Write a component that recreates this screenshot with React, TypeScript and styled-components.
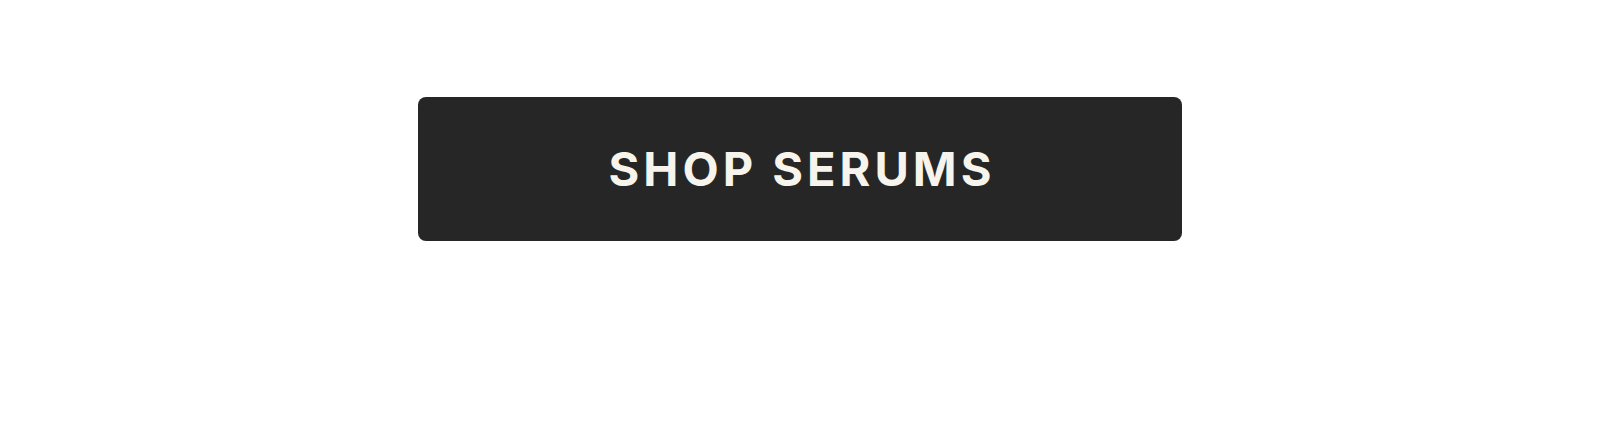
import React from "react";
import styled, { createGlobalStyle } from "styled-components";

const GlobalStyle = createGlobalStyle`
  body {
    margin: 0;
    background: #ffffff;
  }
`;

const Page = styled.main`
  display: flex;
  justify-content: center;
  padding: 97px 24px;
`;

/* The right padding is smaller by the letter spacing that trails the label. */
const ShopButton = styled.button`
  box-sizing: border-box;
  padding: 40px 187px 40px 191px;
  border: 0;
  border-radius: 8px;
  background: #262626;
  color: #f6f4ed;
  font-family: Inter, sans-serif;
  font-size: 47px;
  font-weight: 700;
  line-height: 64px;
  letter-spacing: 4px;
  white-space: nowrap;
  cursor: pointer;
`;

export default function App() {
  return (
    <>
      <GlobalStyle />
      <Page>
        <ShopButton type="button">SHOP SERUMS</ShopButton>
      </Page>
    </>
  );
}
